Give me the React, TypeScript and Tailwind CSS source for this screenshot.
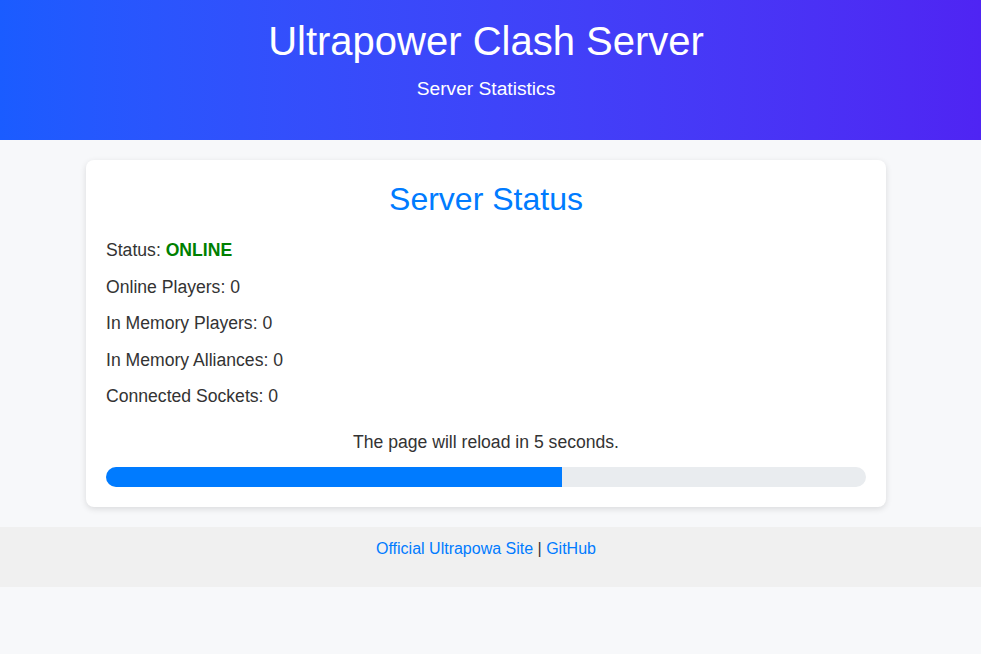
export default function App() {
  const stats = [
    { label: 'Online Players', value: 0 },
    { label: 'In Memory Players', value: 0 },
    { label: 'In Memory Alliances', value: 0 },
    { label: 'Connected Sockets', value: 0 },
  ];

  return (
    <div className="min-h-[654px] bg-[#f7f8fa] font-['Liberation_Sans',Arial,sans-serif] text-[#333]">
      <header className="h-[140px] bg-gradient-to-r from-[#1a5cff] to-[#4f24f3] text-white text-center pt-[17px] pr-[9px]">
        <h1 className="text-[40px] leading-[48px]">Ultrapower Clash Server</h1>
        <p className="mt-[10px] text-[19.2px] leading-[28px]">Server Statistics</p>
      </header>

      <main className="py-5 pr-[9px]">
        <div className="w-[800px] mx-auto bg-white rounded-lg shadow-[0_2px_6px_rgba(0,0,0,0.12)] p-5">
          <h2 className="text-[32px] leading-[38px] text-[#007bff] text-center">Server Status</h2>
          <div className="mt-[22px] text-[17.6px]">
            <p className="h-[36.5px] leading-[20px]">
              Status: <span className="font-bold text-[#008000]">ONLINE</span>
            </p>
            {stats.map((s) => (
              <p key={s.label} className="h-[36.5px] leading-[20px]">
                {s.label}: {s.value}
              </p>
            ))}
          </div>
          <p className="text-center mt-[9px] text-[17.6px] leading-[20px]">The page will reload in 5 seconds.</p>
          <div className="mt-[15px] h-5 rounded-full bg-[#e9ecef] overflow-hidden">
            <div className="h-full bg-[#007bff]" style={{ width: '60%' }} />
          </div>
        </div>
      </main>

      <footer className="h-[60px] bg-[#f0f0f0] text-center pt-[10px] pr-[9px]">
        <a href="#" className="text-[#007bff]">Official Ultrapowa Site</a>
        {' | '}
        <a href="#" className="text-[#007bff]">GitHub</a>
      </footer>
    </div>
  );
}
